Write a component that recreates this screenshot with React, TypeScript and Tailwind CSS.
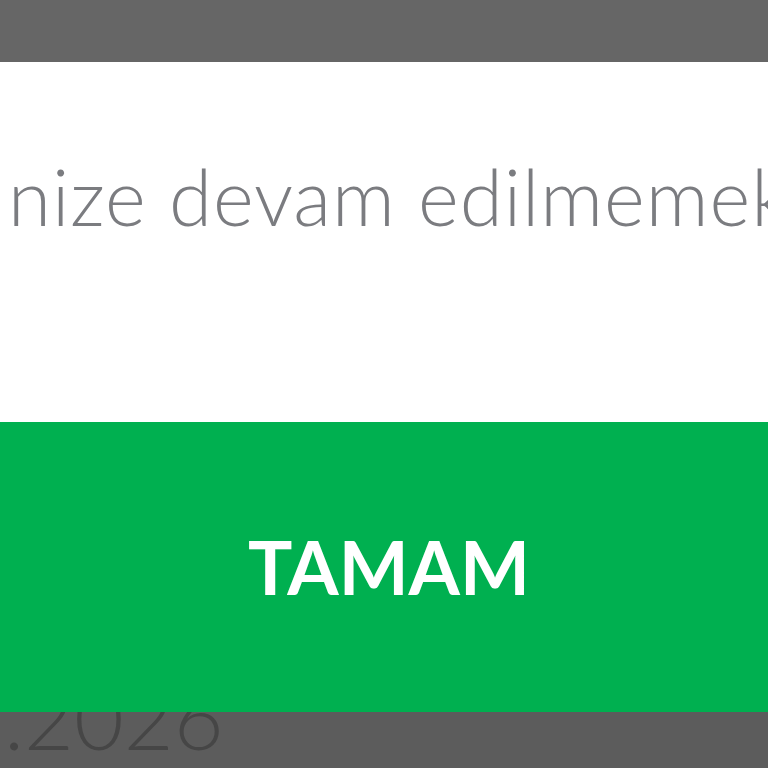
export default function App() {
  return (
    <div className="flex h-[768px] w-[768px] flex-col overflow-hidden bg-[#5c5c5c]" style={{ fontFamily: "Lato, 'Open Sans', sans-serif" }}>
      {/* dimmed backdrop above the dialog */}
      <div className="h-[62px] shrink-0 bg-[#666666]" />

      {/* dialog body */}
      <div className="flex h-[360px] shrink-0 items-start overflow-hidden bg-white pt-[95px]">
        <p className="whitespace-nowrap pl-[8px] text-[78px] leading-none font-light tracking-[1px] text-[#7b7c80]">
          nize devam edilmemek için
        </p>
      </div>

      {/* confirm button */}
      <button className="flex h-[290px] shrink-0 items-center justify-center bg-[#00b050] pl-[10px]">
        <span className="text-[74px] leading-none font-bold tracking-[0px] text-white">TAMAM</span>
      </button>

      {/* backdrop below, date partly hidden */}
      <div className="h-[56px] overflow-hidden">
        <div className="-mt-[38px] pl-[4px] text-[86px] leading-none font-light text-[#464646]">.2026</div>
      </div>
    </div>
  );
}
